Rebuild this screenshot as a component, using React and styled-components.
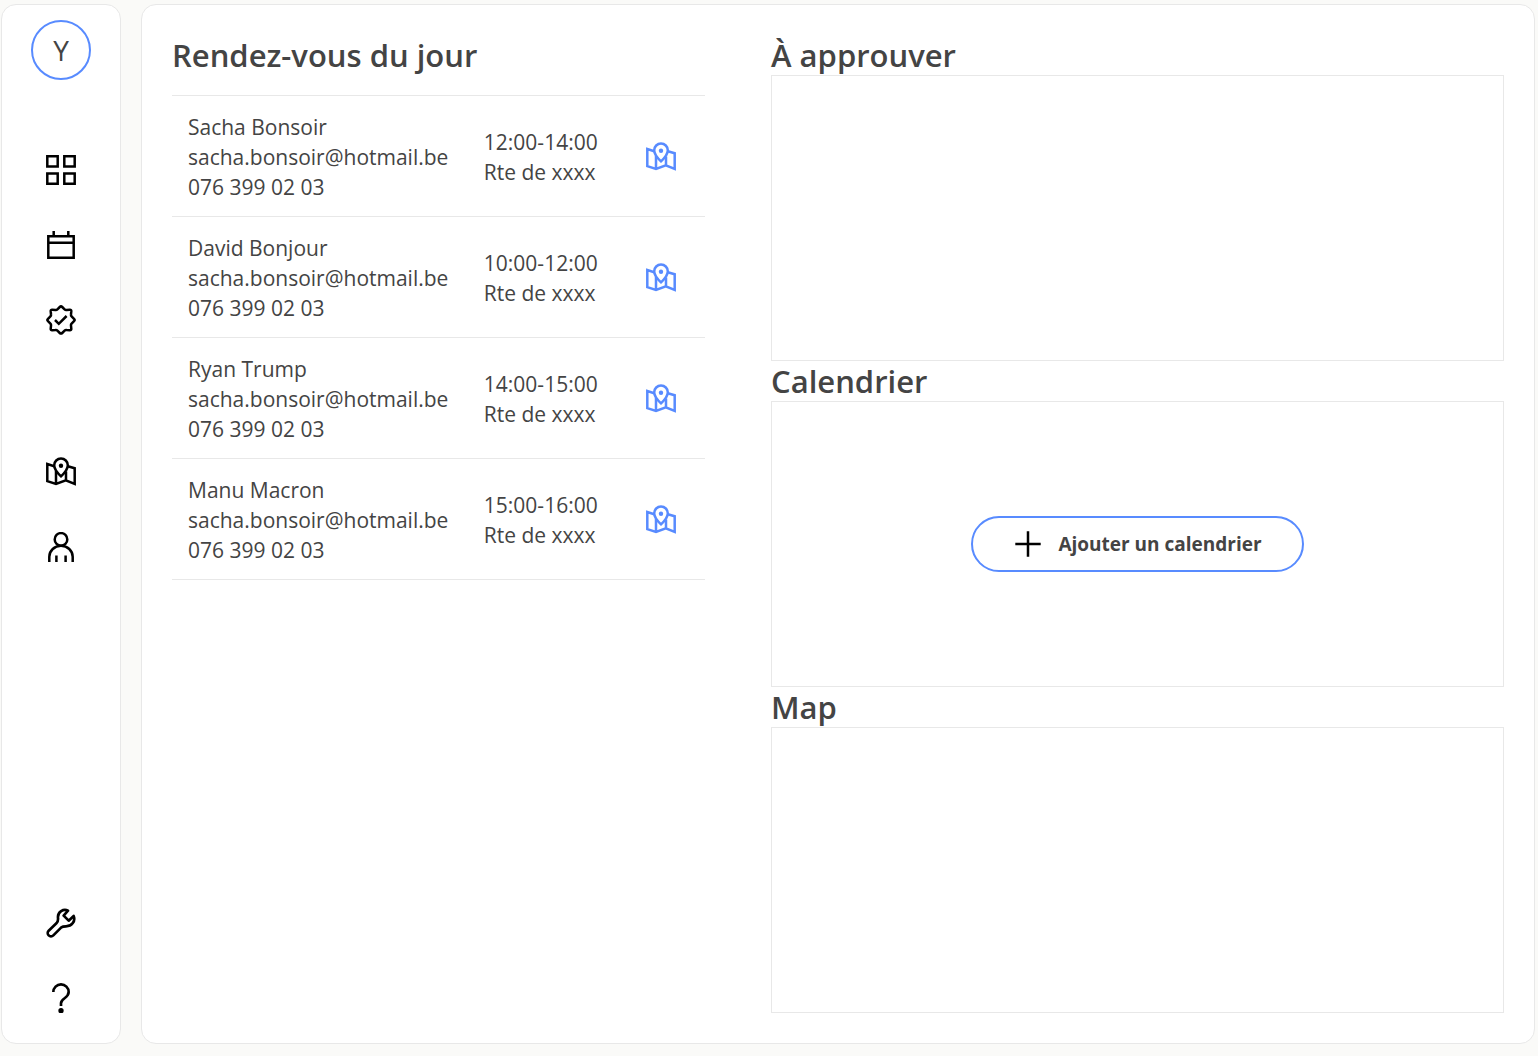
import React from "react";
import styled, { createGlobalStyle } from "styled-components";

const appointments = [
  {
    name: "Sacha Bonsoir",
    email: "sacha.bonsoir@hotmail.be",
    phone: "076 399 02 03",
    time: "12:00-14:00",
    address: "Rte de xxxx",
  },
  {
    name: "David Bonjour",
    email: "sacha.bonsoir@hotmail.be",
    phone: "076 399 02 03",
    time: "10:00-12:00",
    address: "Rte de xxxx",
  },
  {
    name: "Ryan Trump",
    email: "sacha.bonsoir@hotmail.be",
    phone: "076 399 02 03",
    time: "14:00-15:00",
    address: "Rte de xxxx",
  },
  {
    name: "Manu Macron",
    email: "sacha.bonsoir@hotmail.be",
    phone: "076 399 02 03",
    time: "15:00-16:00",
    address: "Rte de xxxx",
  },
];

const GridIcon = () => (
  <Icon viewBox="0 0 30 30">
    <path d="M1.3 1.3h10.4v10.2H1.3zM18.3 1.3h10.4v10.2H18.3zM1.3 18.5h10.4v10.2H1.3zM18.3 18.5h10.4v10.2H18.3z" />
  </Icon>
);

const CalendarIcon = () => (
  <Icon viewBox="0 0 30 30">
    <path d="M2.3 6.3h25.4v21.4H2.3zM2.3 12.8h25.4M7.7 1v5M22.3 1v5" />
  </Icon>
);

const BadgeIcon = () => (
  <Icon viewBox="0 0 30 30" strokeLinejoin="round">
    <path d="M13.8 2Q15 .8 16.2 2L18.6 4.4Q19.4 5.2 20.6 5L23.8 4.7Q25.4 4.6 25.3 6.2L25 9.4Q24.800 10.6 25.600 11.400L28 13.8Q29.2 15 28 16.2L25.6 18.6Q24.8 19.4 25 20.6L25.3 23.8Q25.4 25.4 23.8 25.3L20.6 25Q19.400 24.800 18.600 25.600L16.2 28Q15 29.2 13.8 28L11.4 25.6Q10.6 24.8 9.4 25L6.2 25.3Q4.6 25.4 4.7 23.8L5 20.6Q5.200 19.400 4.400 18.600L2 16.2Q.8 15 2 13.8L4.4 11.4Q5.2 10.6 5 9.4L4.7 6.2Q4.6 4.6 6.2 4.7L9.4 5Q10.6 5.2 11.4 4.4Z" />
    <path d="M9 15l3.800 3.800 7.800-7.800" strokeLinejoin="miter" />
  </Icon>
);

const MapIcon = () => (
  <Icon viewBox="0 0 30 30">
    <path d="M15 19.4C11.8 16.4 8.2 12.6 8.2 8.3a6.8 6.8 0 0 1 13.6 0C21.8 12.6 18.2 16.4 15 19.4z" />
    <path d="M8.2 9.2L1.3 7v17.2l8.7 2.8 9.8-3.6 8.9 3.6V11.3l-6.9-2.1M10 14v13M20 14.5v9" />
    <circle cx="15" cy="8.8" r="2.2" fill="currentColor" stroke="none" />
  </Icon>
);

const UserIcon = () => (
  <Icon viewBox="0 0 30 30">
    <circle cx="15" cy="7.4" r="6.3" />
    <path d="M3.3 30v-5.2a11.7 11 0 0 1 23.4 0V30M10.4 23.6V30M19.6 23.6V30" />
  </Icon>
);

const WrenchIcon = () => (
  <Icon viewBox="0 0 90 90" strokeWidth="8" strokeLinejoin="round">
    <path d="M66 8C53 1 34 11 36 30Q37 39 32 45L8 68A9.5 9.5 0 0 0 22 82L46 58Q50 55 60 55C78 55 89 39 83 24L68 38 53 23Z" />
  </Icon>
);

const HelpIcon = () => (
  <Icon viewBox="0 0 90 90" strokeWidth="8">
    <path d="M22 27A23 23 0 0 1 68 27C68 46 45 45 45 61V69" />
    <circle cx="45" cy="83" r="8" fill="currentColor" stroke="none" />
  </Icon>
);

const PlusIcon = () => (
  <Icon viewBox="0 0 30 30" stroke="#000">
    <path d="M15 2.3v25.4M2.3 15h25.4" />
  </Icon>
);

function Sidebar() {
  return (
    <SidebarStyled>
      <Avatar type="button">Y</Avatar>
      <NavGroup $top="75px">
        <NavLink href="#dashboard" aria-label="Tableau de bord">
          <GridIcon />
        </NavLink>
        <NavLink href="#calendar" aria-label="Calendrier">
          <CalendarIcon />
        </NavLink>
        <NavLink href="#approve" aria-label="À approuver">
          <BadgeIcon />
        </NavLink>
      </NavGroup>
      <NavGroup $top="122px">
        <NavLink href="#map" aria-label="Map">
          <MapIcon />
        </NavLink>
        <NavLink href="#clients" aria-label="Clients">
          <UserIcon />
        </NavLink>
      </NavGroup>
      <NavGroup $top="auto">
        <NavLink href="#settings" aria-label="Paramètres">
          <WrenchIcon />
        </NavLink>
        <NavLink href="#help" aria-label="Aide">
          <HelpIcon />
        </NavLink>
      </NavGroup>
    </SidebarStyled>
  );
}

function Appointments() {
  return (
    <section>
      <Title>Rendez-vous du jour</Title>
      <Table>
        <tbody>
          {appointments.map((item) => (
            <tr key={item.name}>
              <Cell $width="55.5%">
                {item.name}
                <br />
                {item.email}
                <br />
                {item.phone}
              </Cell>
              <Cell $width="30.5%">
                {item.time}
                <br />
                {item.address}
              </Cell>
              <Cell>
                <MapLink href="#map" aria-label={"Itinéraire " + item.name}>
                  <MapIcon />
                </MapLink>
              </Cell>
            </tr>
          ))}
        </tbody>
      </Table>
    </section>
  );
}

function App() {
  return (
    <>
      <GlobalStyle />
      <Page>
        <Sidebar />
        <Main>
          <Appointments />
          <Column>
            <Panel>
              <Title>À approuver</Title>
              <PanelBox />
            </Panel>
            <Panel>
              <Title>Calendrier</Title>
              <PanelBox>
                <AddButton type="button">
                  <PlusIcon />
                  Ajouter un calendrier
                </AddButton>
              </PanelBox>
            </Panel>
            <Panel>
              <Title>Map</Title>
              <PanelBox />
            </Panel>
          </Column>
        </Main>
      </Page>
    </>
  );
}

const GlobalStyle = createGlobalStyle`
  :root {
    --primary-color: #588bff;
    --border-color: #e8e8e8;
    --background-color: #fafaf8;
    --font-color: #444;
  }
  * {
    box-sizing: border-box;
    margin: 0;
    padding: 0;
  }
  body {
    background: var(--background-color);
    color: var(--font-color);
    font-family: "Segoe UI", "Open Sans", sans-serif;
    font-size: 21px;
    line-height: 30px;
  }
`;

const Page = styled.div`
  display: flex;
  gap: 20px;
  min-height: 100vh;
  padding: 4px 3px 12px 1px;
`;

const Icon = styled.svg.attrs((props) => ({
  fill: "none",
  stroke: props.stroke || "currentColor",
  strokeWidth: props.strokeWidth || 2.5,
  "aria-hidden": true,
}))`
  display: block;
  flex: none;
  width: 30px;
  height: 30px;
`;

const SidebarStyled = styled.nav`
  display: flex;
  flex-direction: column;
  align-items: center;
  flex: 0 0 120px;
  padding: 15px 0 30px;
  background: #fff;
  border: 1px solid var(--border-color);
  border-radius: 15px;
`;

const Avatar = styled.button`
  width: 60px;
  height: 60px;
  border: 2px solid var(--primary-color);
  border-radius: 50%;
  background: #fff;
  color: inherit;
  font: inherit;
  font-size: 28px;
  cursor: pointer;
`;

const NavGroup = styled.div`
  display: flex;
  flex-direction: column;
  gap: 45px;
  margin-top: ${(props) => props.$top};
`;

const NavLink = styled.a`
  color: #000;
`;

const Main = styled.main`
  display: grid;
  grid-template-columns: 8fr 11fr;
  gap: 66px;
  flex: 1;
  padding: 30px;
  background: #fff;
  border: 1px solid var(--border-color);
  border-radius: 15px;
`;

const Title = styled.h2`
  font-size: 31px;
  font-weight: 600;
  line-height: 40px;
`;

const Table = styled.table`
  width: 100%;
  margin-top: 20px;
  border-spacing: 0;
  border-top: 1px solid var(--border-color);
`;

const Cell = styled.td`
  width: ${(props) => props.$width || "auto"};
  padding: 16px 15px 14px 16px;
  border-bottom: 1px solid var(--border-color);
  vertical-align: middle;
  white-space: nowrap;
`;

const MapLink = styled.a`
  display: block;
  width: 30px;
  color: var(--primary-color);
`;

const Column = styled.div`
  display: flex;
  flex-direction: column;
`;

const Panel = styled.section`
  display: flex;
  flex-direction: column;
  flex: 1;
`;

const PanelBox = styled.div`
  display: flex;
  align-items: center;
  justify-content: center;
  flex: 1;
  border: 1px solid var(--border-color);
`;

const AddButton = styled.button`
  display: flex;
  align-items: center;
  gap: 15px;
  height: 56px;
  padding: 0 40px;
  border: 2px solid var(--primary-color);
  border-radius: 28px;
  background: #fff;
  color: inherit;
  font: inherit;
  font-size: 19px;
  font-weight: 700;
  cursor: pointer;
`;

export default App;
